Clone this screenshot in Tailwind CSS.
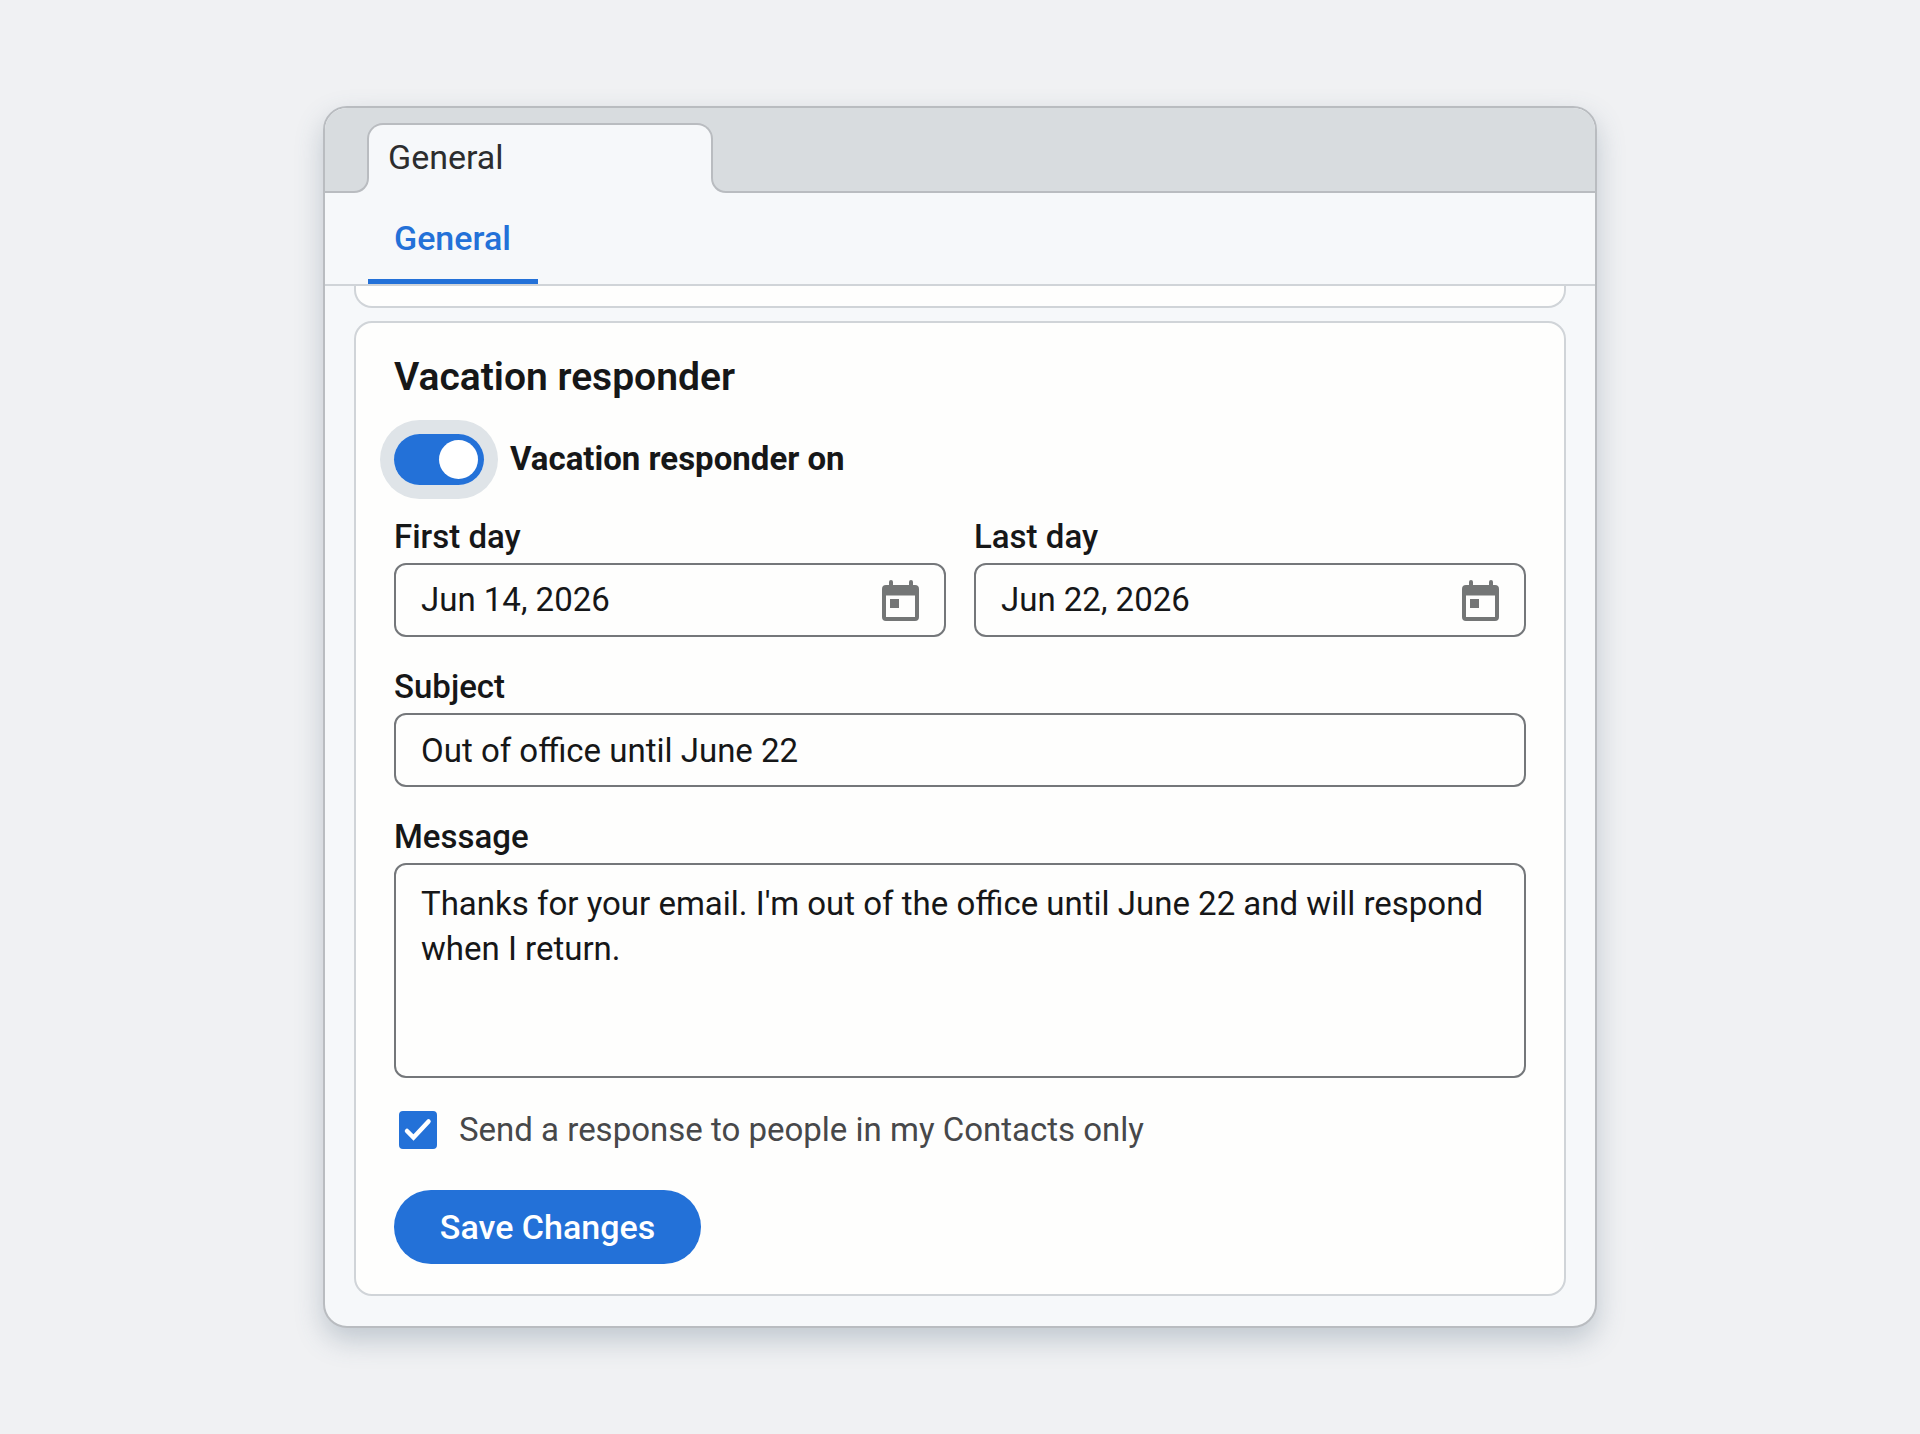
<!DOCTYPE html>
<html lang="en">
<head>
    <meta charset="UTF-8">
    <meta name="viewport" content="width=device-width, initial-scale=1.0">
    <title>Vacation responder</title>
    <script src="https://cdn.jsdelivr.net/npm/@tailwindcss/browser@4"></script>
</head>
<body class="bg-[#f0f1f3] min-h-screen flex items-center justify-center font-[Roboto,sans-serif] text-[#161718]">
    <div class="w-full max-w-[1274px] rounded-3xl border-2 border-[#b9bcc0] bg-[#f6f8fa] overflow-hidden shadow-[0_12px_28px_rgba(70,95,115,0.28)]">
        <!-- Tab strip -->
        <div class="flex bg-[#d8dcdf] border-b-2 border-[#b9bcc0] px-[42px] pt-[15px]">
            <div class="relative w-[346px] h-[70px] -mb-[2px] rounded-t-[16px] border-2 border-b-0 border-[#b9bcc0] bg-[#f6f8fa] px-[19px] pt-3 text-[34px] leading-10 text-[#2c2d2e]">
                <span>General</span>
                <svg class="absolute -left-4 bottom-0" width="16" height="16" viewBox="0 0 16 16" fill="none" aria-hidden="true">
                    <path d="M0 15h1C9 15 15 9 15 1V0h1v16H0z" fill="#f6f8fa"/>
                    <path d="M0 15h1C9 15 15 9 15 1V0" stroke="#b9bcc0" stroke-width="2"/>
                </svg>
                <svg class="absolute -right-4 bottom-0" width="16" height="16" viewBox="0 0 16 16" fill="none" aria-hidden="true">
                    <path d="M16 15h-1C7 15 1 9 1 1V0H0v16h16z" fill="#f6f8fa"/>
                    <path d="M16 15h-1C7 15 1 9 1 1V0" stroke="#b9bcc0" stroke-width="2"/>
                </svg>
            </div>
        </div>

        <!-- Settings nav -->
        <nav class="flex border-b-2 border-[#d0d4d8] px-[43px]">
            <a href="#general" class="w-[170px] h-[91px] border-b-[5px] border-[#2371d8] pl-[26px] pt-[25px] text-[34px] leading-10 font-medium text-[#2371d8]">General</a>
        </nav>

        <main id="general" class="px-[29px] pb-[30px]">
            <!-- End of the previous section -->
            <div class="h-[22px] rounded-b-[18px] border-2 border-t-0 border-[#d0d4d8] bg-[#fefefd]"></div>

            <form class="mt-[13px] rounded-[18px] border-2 border-[#d0d4d8] bg-[#fefefd] px-[38px] pt-8 pb-[30px] text-[33px] leading-10">
                <h2 class="text-[39px] leading-11 font-semibold">Vacation responder</h2>

                <div class="mt-5 h-20 flex items-center gap-[26px]">
                    <span class="flex h-[51px] w-[90px] rounded-full ring-[14px] ring-[#dfe4e8]">
                        <input id="responder" type="checkbox" role="switch" checked class="appearance-none h-full w-full rounded-full bg-gray-400 p-[6px] checked:bg-[#2371d8] before:block before:size-[39px] before:rounded-full before:bg-white checked:before:ml-auto">
                    </span>
                    <label for="responder" class="font-bold">Vacation responder on</label>
                </div>

                <div class="mt-[18px] grid grid-cols-2 gap-7">
                    <div>
                        <label for="firstDay" class="block font-medium">First day</label>
                        <div class="mt-[6px] h-[74px] flex items-center rounded-xl border-2 border-[#74777a] px-[25px]">
                            <input id="firstDay" type="text" value="Jun 14, 2026" class="min-w-0 flex-1 outline-none">
                            <button type="button" aria-label="Choose first day">
                                <svg width="37" height="41" viewBox="0 0 37 41" fill="#747676">
                                    <path fill-rule="evenodd" d="M7 2a2 2 0 0 1 4 0v3h16V2a2 2 0 0 1 4 0v3h2a4 4 0 0 1 4 4v28a4 4 0 0 1-4 4H4a4 4 0 0 1-4-4V9a4 4 0 0 1 4-4h3zM4 15.500V37h29V15.500z"/>
                                    <rect x="8" y="19" width="9" height="9"/>
                                </svg>
                            </button>
                        </div>
                    </div>
                    <div>
                        <label for="lastDay" class="block font-medium">Last day</label>
                        <div class="mt-[6px] h-[74px] flex items-center rounded-xl border-2 border-[#74777a] px-[25px]">
                            <input id="lastDay" type="text" value="Jun 22, 2026" class="min-w-0 flex-1 outline-none">
                            <button type="button" aria-label="Choose last day">
                                <svg width="37" height="41" viewBox="0 0 37 41" fill="#747676">
                                    <path fill-rule="evenodd" d="M7 2a2 2 0 0 1 4 0v3h16V2a2 2 0 0 1 4 0v3h2a4 4 0 0 1 4 4v28a4 4 0 0 1-4 4H4a4 4 0 0 1-4-4V9a4 4 0 0 1 4-4h3zM4 15.500V37h29V15.500z"/>
                                    <rect x="8" y="19" width="9" height="9"/>
                                </svg>
                            </button>
                        </div>
                    </div>
                </div>

                <div class="mt-[30px]">
                    <label for="subject" class="block font-medium">Subject</label>
                    <input id="subject" type="text" value="Out of office until June 22" class="mt-[6px] block w-full h-[74px] rounded-xl border-2 border-[#74777a] px-[25px]">
                </div>

                <div class="mt-[30px]">
                    <label for="message" class="block font-medium">Message</label>
                    <textarea id="message" class="mt-[6px] block w-full h-[215px] resize-none rounded-xl border-2 border-[#74777a] px-[25px] py-4 leading-[45px]">Thanks for your email. I'm out of the office until June 22 and will respond when I return.</textarea>
                </div>

                <div class="mt-8 flex items-center gap-[22px] pl-[5px]">
                    <span class="grid size-[38px]">
                        <input id="contacts" type="checkbox" checked class="col-start-1 row-start-1 appearance-none size-full rounded-[4px] border-2 border-[#74777a] checked:border-[#2371d8] checked:bg-[#2371d8]">
                        <svg class="col-start-1 row-start-1 pointer-events-none" width="38" height="38" viewBox="0 0 38 38" fill="none" stroke="#fff" stroke-width="4.500" stroke-linecap="round" aria-hidden="true">
                            <path d="M8 20l6.500 6.500L29.500 10.500"/>
                        </svg>
                    </span>
                    <label for="contacts" class="text-[#47484a]">Send a response to people in my Contacts only</label>
                </div>

                <button type="submit" class="mt-10 block h-[74px] w-[307px] rounded-full bg-[#2371d8] text-[34px] font-medium text-white">Save Changes</button>
            </form>
        </main>
    </div>
</body>
</html>
